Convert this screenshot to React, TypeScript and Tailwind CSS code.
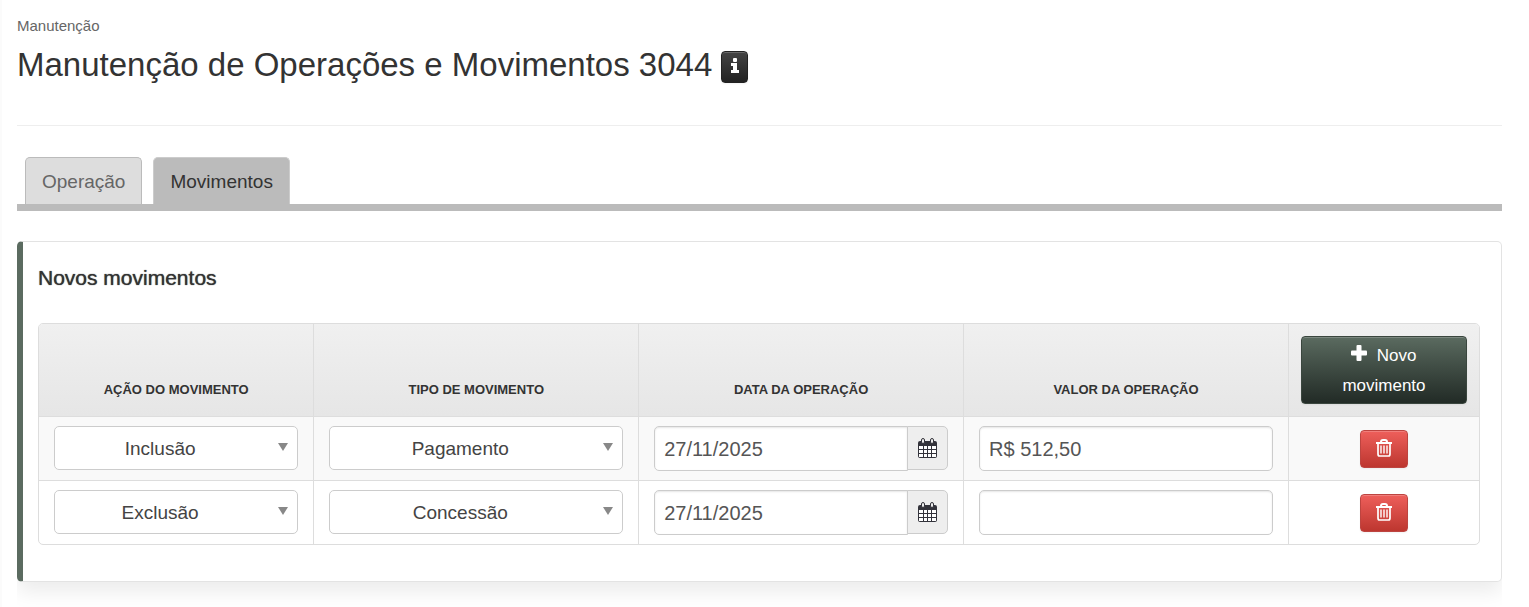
import { useState } from 'react';

type Movement = {
  id: number;
  action: string;
  type: string;
  date: string;
  value: string;
};

const ACTIONS = ['Inclusão', 'Exclusão'];
const TYPES = ['Pagamento', 'Concessão'];

const INITIAL: Movement[] = [
  { id: 1, action: 'Inclusão', type: 'Pagamento', date: '27/11/2025', value: 'R$ 512,50' },
  { id: 2, action: 'Exclusão', type: 'Concessão', date: '27/11/2025', value: '' },
];

function InfoIcon() {
  return (
    <svg width="8" height="15" viewBox="0 0 8 15" fill="currentColor" aria-hidden="true">
      <rect x="2" y="0" width="4" height="4" rx="1" />
      <path d="M0 5h6v7h2v3H0v-3h2V8H0z" />
    </svg>
  );
}

function PlusIcon() {
  return (
    <svg width="16" height="16" viewBox="0 0 16 16" fill="currentColor" aria-hidden="true" className="inline-block align-baseline">
      <rect x="0" y="5.500" width="16" height="5" rx="1" />
      <rect x="5.500" y="0" width="5" height="16" rx="1" />
    </svg>
  );
}

function CalendarIcon() {
  return (
    <svg width="19" height="21" viewBox="0 0 19 21" aria-hidden="true">
      <path d="M2 3h15q2 0 2 2v13q0 2-2 2H2q-2 0-2-2V5q0-2 2-2z" fill="#33333b" />
      <path
        d="M1 8h4v3H1zM6 8h3v3H6zM10 8h3v3h-3zM14 8h4v3h-4zM1 12h4v3H1zM6 12h3v3H6zM10 12h3v3h-3zM14 12h4v3h-4zM1 16h4v3H1zM6 16h3v3H6zM10 16h3v3h-3zM14 16h4v3h-4z"
        fill="#fff"
      />
      <rect x="3.500" y=".5" width="3" height="5" rx="1.500" fill="#eee" stroke="#33333b" />
      <rect x="12.500" y=".5" width="3" height="5" rx="1.500" fill="#eee" stroke="#33333b" />
    </svg>
  );
}

function TrashIcon() {
  return (
    <svg width="16" height="18" viewBox="0 0 16 18" fill="none" stroke="currentColor" aria-hidden="true">
      <path d="M0 4h16" strokeWidth="2" />
      <path d="M5 4V3q0-2 2-2h2q2 0 2 2v1" strokeWidth="2" />
      <path d="M2 4v11q0 2 1.500 2h9q1.500 0 1.500-2V4" strokeWidth="1.700" />
      <path d="M5 6.500v8M8 6.500v8M11 6.500v8" strokeWidth="1.400" />
    </svg>
  );
}

function SelectBox({
  label,
  value,
  options,
  onChange,
}: {
  label: string;
  value: string;
  options: string[];
  onChange: (value: string) => void;
}) {
  return (
    <div className="relative">
      <select
        aria-label={label}
        value={value}
        onChange={(e) => onChange(e.target.value)}
        className="block h-11 w-full appearance-none rounded-[5px] border border-[#ccc] bg-white pl-2 pr-10 pt-0.5 text-center text-[19px] text-[#444]"
      >
        {options.map((option) => (
          <option key={option}>{option}</option>
        ))}
      </select>
      <svg width="10" height="8" viewBox="0 0 10 8" className="pointer-events-none absolute right-2.5 top-[17px]" aria-hidden="true">
        <path d="M0 0h10L5 8z" fill="#888" />
      </svg>
    </div>
  );
}

const inputClass =
  'block h-[45px] w-full min-w-0 border border-[#ccc] bg-white px-[9px] pt-0.5 text-[20px] text-[#555] shadow-[inset_0_1px_2px_rgba(0,0,0,0.1)]';
const thClass = 'border-l border-[#ddd] px-2 pb-4 align-bottom text-[13px] leading-5 font-bold uppercase first:border-l-0';
const tdClass = 'border-l border-t border-[#ddd] px-[15px] pt-[9px] pb-[9px] align-top first:border-l-0';

export default function App() {
  const [tab, setTab] = useState('Movimentos');
  const [movements, setMovements] = useState(INITIAL);

  const update = (id: number, changes: Partial<Movement>) => {
    setMovements(movements.map((m) => (m.id === id ? { ...m, ...changes } : m)));
  };

  const addMovement = () => {
    setMovements([...movements, { id: Date.now(), action: 'Inclusão', type: 'Pagamento', date: '', value: '' }]);
  };

  return (
    <div className="overflow-hidden border-l-2 border-[#fbfbfb] bg-white pb-8 pl-[15px] pr-[27px] font-['Liberation_Sans',Arial,sans-serif] text-[#333]">
      <header className="border-b border-[#eee] pb-10 pt-4">
        <p className="text-[15px] leading-5 text-[#666]">Manutenção</p>
        <div className="mt-[9px] flex items-center gap-[9px]">
          <h1 className="text-[33px] leading-10">Manutenção de Operações e Movimentos 3044</h1>
          <button
            type="button"
            aria-label="Informações"
            className="mt-1 flex h-8 w-[27px] items-center justify-center rounded-[4px] border border-[#222] bg-linear-to-b from-[#444] to-[#222] pb-1 text-white shadow-[inset_0_1px_0_rgba(255,255,255,0.2),0_1px_2px_rgba(0,0,0,0.05)]"
          >
            <InfoIcon />
          </button>
        </div>
      </header>

      <nav className="mt-[31px] flex gap-[11px] border-b-[7px] border-[#bbb] pl-2">
        {['Operação', 'Movimentos'].map((name) => (
          <button
            key={name}
            type="button"
            onClick={() => setTab(name)}
            className={
              tab === name
                ? 'h-[47px] rounded-t-[5px] border border-b-0 border-[#ccc] bg-[#bbb] px-4 pt-0.5 text-[19px] text-[#333]'
                : 'h-[47px] rounded-t-[5px] border border-b-0 border-[#bbb] bg-[#ddd] px-4 pt-0.5 text-[19px] text-[#666]'
            }
          >
            {name}
          </button>
        ))}
      </nav>

      <section className="mt-[30px] rounded-[5px] border border-l-[6px] border-[#e3e3e3] border-l-[#5b6b60] bg-white pb-9 pl-[15px] pr-[21px] pt-[21px] shadow-[0_10px_20px_rgba(0,0,0,0.08)] [clip-path:inset(0_0_-32px_0)]">
        <h2 className="text-[21px] leading-[30px] [text-shadow:0_0_1px_#333]">Novos movimentos</h2>
        <div className="mt-[30px] overflow-hidden rounded-[5px] border border-[#ddd]">
          <table className="w-full table-fixed border-separate border-spacing-0">
            <colgroup>
              <col className="w-[19.05%]" />
              <col className="w-[22.56%]" />
              <col className="w-[22.56%]" />
              <col className="w-[22.56%]" />
              <col />
            </colgroup>
            <thead className="bg-linear-to-b from-[#f0f0f0] to-[#e6e6e6]">
              <tr>
                <th className={thClass}>Ação do movimento</th>
                <th className={thClass}>Tipo de movimento</th>
                <th className={thClass}>Data da operação</th>
                <th className={thClass}>Valor da operação</th>
                <th className="border-l border-[#ddd] p-3 font-normal">
                  <button
                    type="button"
                    onClick={addMovement}
                    className="block w-full rounded-[4px] border border-[#3a463e] bg-linear-to-b from-[#5b6b60] to-[#222b26] px-8 pb-0.5 pt-1 text-[17px] leading-[30px] text-white shadow-[inset_0_1px_0_rgba(255,255,255,0.2),0_1px_2px_rgba(0,0,0,0.05)]"
                  >
                    <PlusIcon /> &nbsp;Novo movimento
                  </button>
                </th>
              </tr>
            </thead>
            <tbody>
              {movements.map((m) => (
                <tr key={m.id} className="odd:bg-[#f9f9f9]">
                  <td className={tdClass}>
                    <SelectBox label="Ação do movimento" value={m.action} options={ACTIONS} onChange={(action) => update(m.id, { action })} />
                  </td>
                  <td className={tdClass}>
                    <SelectBox label="Tipo de movimento" value={m.type} options={TYPES} onChange={(type) => update(m.id, { type })} />
                  </td>
                  <td className={tdClass}>
                    <div className="flex items-start">
                      <input
                        aria-label="Data da operação"
                        value={m.date}
                        onChange={(e) => update(m.id, { date: e.target.value })}
                        className={`${inputClass} flex-1 rounded-l-[5px]`}
                      />
                      <button
                        type="button"
                        aria-label="Abrir calendário"
                        className="-ml-px flex h-11 w-[41px] items-center justify-center rounded-r-[5px] border border-[#ccc] bg-[#eee]"
                      >
                        <CalendarIcon />
                      </button>
                    </div>
                  </td>
                  <td className={tdClass}>
                    <input
                      aria-label="Valor da operação"
                      value={m.value}
                      onChange={(e) => update(m.id, { value: e.target.value })}
                      className={`${inputClass} rounded-[5px]`}
                    />
                  </td>
                  <td className="border-l border-t border-[#ddd] text-center align-middle">
                    <button
                      type="button"
                      aria-label="Excluir movimento"
                      onClick={() => setMovements(movements.filter((other) => other.id !== m.id))}
                      className="mx-auto flex h-[38px] w-12 items-center justify-center rounded-[4px] border border-[#bd4440] bg-linear-to-b from-[#ee5f5b] to-[#bd362f] pb-0.5 text-white shadow-[inset_0_1px_0_rgba(255,255,255,0.2),0_1px_2px_rgba(0,0,0,0.05)]"
                    >
                      <TrashIcon />
                    </button>
                  </td>
                </tr>
              ))}
            </tbody>
          </table>
        </div>
      </section>
    </div>
  );
}
